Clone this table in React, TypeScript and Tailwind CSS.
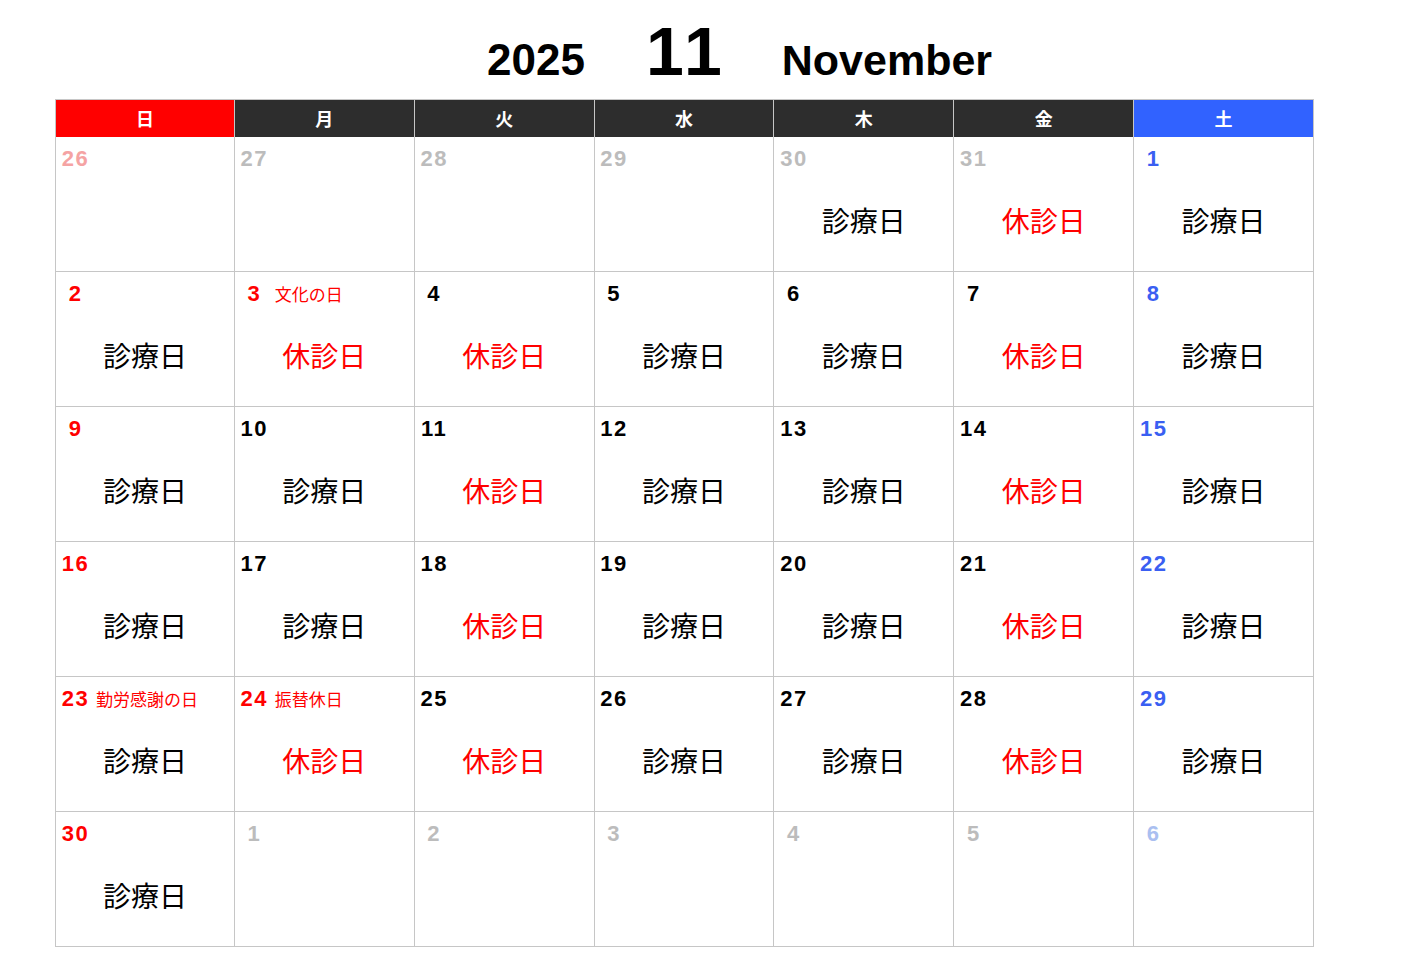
import React from 'react'

type Kind = 'prev' | 'cur' | 'next'

interface Day {
    n: number
    kind: Kind
    status?: 'open' | 'closed'
    holiday?: string
}

const weekdays = ['日', '月', '火', '水', '木', '金', '土']

const headerBg = ['bg-[#ff0000]', 'bg-[#2d2d2d]', 'bg-[#2d2d2d]', 'bg-[#2d2d2d]', 'bg-[#2d2d2d]', 'bg-[#2d2d2d]', 'bg-[#3162ff]']

// weekly pattern: 日 月 火 水 木 金 土
const pattern: ('open' | 'closed')[] = ['open', 'open', 'closed', 'open', 'open', 'closed', 'open']

function buildDays(): Day[] {
    const days: Day[] = []
    for (let n = 26; n <= 29; n++) days.push({ n, kind: 'prev' })
    days.push({ n: 30, kind: 'prev', status: 'open' })
    days.push({ n: 31, kind: 'prev', status: 'closed' })
    for (let n = 1; n <= 30; n++) {
        const col = (n + 5) % 7
        const d: Day = { n, kind: 'cur', status: pattern[col] }
        if (n === 3) {
            d.holiday = '文化の日'
            d.status = 'closed'
        }
        if (n === 23) d.holiday = '勤労感謝の日'
        if (n === 24) {
            d.holiday = '振替休日'
            d.status = 'closed'
        }
        days.push(d)
    }
    for (let n = 1; n <= 6; n++) days.push({ n, kind: 'next' })
    return days
}

function numberColor(day: Day, col: number) {
    if (day.kind === 'cur') {
        if (col === 0 || day.holiday) return 'text-[#ff0000]'
        if (col === 6) return 'text-[#3a5ff2]'
        return 'text-black'
    }
    if (col === 0) return 'text-[#f5a3a3]'
    if (col === 6) return 'text-[#aabff0]'
    return 'text-[#bcbcbc]'
}

function DayCell({ day, col }: { day: Day; col: number }) {
    return (
        <div
            className={`h-[135px] border-b border-r border-[#c6c6c6] bg-white ${col === 0 ? 'border-l' : ''}`}
        >
            <div className="flex h-[34px] items-baseline pl-[5px] pt-[10px]">
                <span
                    className={`w-[29px] text-center text-[22px] font-bold leading-[24px] tracking-[1.5px] ${numberColor(day, col)}`}
                    style={{ fontFamily: '"Liberation Sans", Arial, sans-serif' }}
                >
                    {day.n}
                </span>
                {day.holiday && (
                    <span
                        className="ml-[6px] whitespace-nowrap text-[17px] leading-[24px] text-[#ff0000]"
                        style={{ fontFamily: '"Noto Sans CJK JP", sans-serif' }}
                    >
                        {day.holiday}
                    </span>
                )}
            </div>
            {day.status && (
                <div
                    className={`mt-[35px] text-center text-[28px] leading-[28px] ${day.status === 'closed' ? 'text-[#ff0000]' : 'text-black'}`}
                    style={{ fontFamily: '"Noto Sans CJK JP", sans-serif' }}
                >
                    {day.status === 'closed' ? '休診日' : '診療日'}
                </div>
            )}
        </div>
    )
}

export default function App() {
    const days = buildDays()

    return (
        <div className="min-h-[968px] w-[1423px] bg-white pl-[55px]" style={{ fontFamily: '"Liberation Sans", Arial, sans-serif' }}>
            <div className="flex h-[99px] items-baseline pl-[432px] pt-[16px] font-bold text-black">
                <span className="text-[44px] leading-[70px]">2025</span>
                <span className="ml-[61px] text-[68px] leading-[70px] tracking-[4px]">11</span>
                <span className="ml-[56px] text-[43px] leading-[70px]">November</span>
            </div>

            <div className="grid w-[1259px] grid-cols-7">
                {weekdays.map((w, i) => (
                    <div
                        key={w}
                        className={`flex h-[38px] items-center justify-center border-r border-t border-[#c6c6c6] ${i === 0 ? 'border-l' : ''} ${headerBg[i]}`}
                    >
                        <span
                            className="text-[18px] font-bold text-white"
                            style={{ fontFamily: '"Noto Sans CJK JP", sans-serif' }}
                        >
                            {w}
                        </span>
                    </div>
                ))}
                {days.map((d, i) => (
                    <DayCell key={i} day={d} col={i % 7} />
                ))}
            </div>
        </div>
    )
}
